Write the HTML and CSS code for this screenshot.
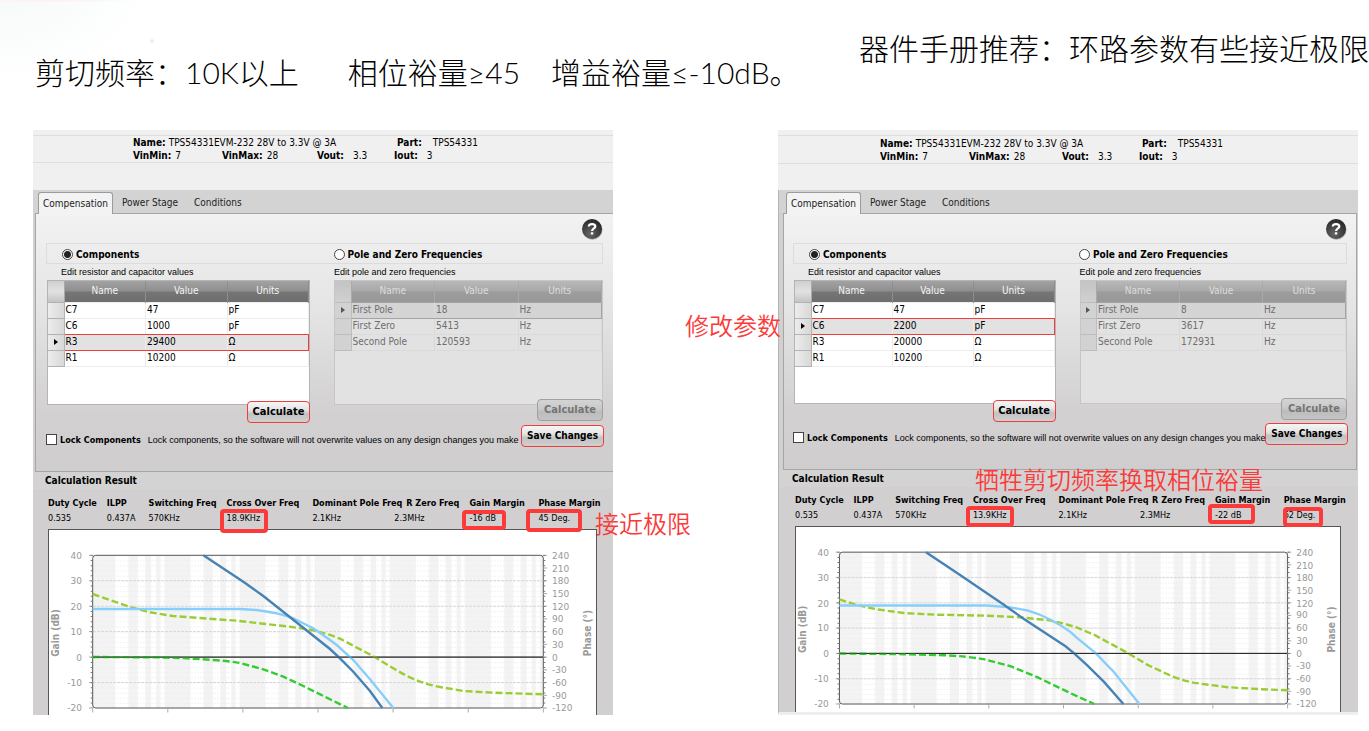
FILE: index.html
```html
<!DOCTYPE html>
<html lang="zh-CN">
<head>
<meta charset="utf-8">
<title>环路参数</title>
<link rel="stylesheet" href="styles.css">
</head>
<body>
<svg class="defs" aria-hidden="true">
  <defs>
    <pattern id="decade" x="44.7" y="0" width="75.1" height="200" patternUnits="userSpaceOnUse">
      <path fill="#f3f3f3" d="M0 0h22.6v200H0zM35.8 0h9.4v200h-9.4zM52.5 0h5.9v200h-5.9zM63.5 0h4.3v200h-4.3zM71.7 0h3.4v200h-3.4z"/>
    </pattern>
    <pattern id="minor" x="0" y="26.3" width="20" height="5.09" patternUnits="userSpaceOnUse">
      <path stroke="#ececec" stroke-width=".7" stroke-dasharray="2 1" d="M0 .5h20"/>
    </pattern>
    <radialGradient id="ball" cx=".4" cy=".75" r=".8">
      <stop offset="0" stop-color="#666"/><stop offset="1" stop-color="#222"/>
    </radialGradient>
    <symbol id="axes" viewBox="0 0 549 188">
      <rect x="44.7" y="26.3" width="450.6" height="152.7" fill="url(#decade)"/>
      <rect x="44.7" y="26.3" width="450.6" height="152.7" fill="url(#minor)"/>
      <path stroke="#d8d8d8" stroke-dasharray="3 1" d="M45 51.7h450M45 77.2h450M45 102.6h450M45 153.5h450"/>
      <path stroke="#222" d="M45 128.1h450"/>
      <rect x="44.7" y="26.3" width="450.6" height="152.7" rx="3" fill="none" stroke="#555"/>
      <path stroke="#aaa" d="M41 26.3h4M41 51.7h4M41 77.2h4M41 102.6h4M41 128.1h4M41 153.5h4M41 179h4M44.7 179v4.500M119.800 179v4.500M194.900 179v4.500M270 179v4.500M345.100 179v4.500M420.200 179v4.500M495.300 179v4.500M495 26.300h4M495 39h4M495 51.700h4M495 64.500h4M495 77.200h4M495 89.900h4M495 102.600h4M495 115.400h4M495 128.100h4M495 140.800h4M495 153.500h4M495 166.300h4M495 179h4"/>
      <path stroke="#777" stroke-width="2" stroke-dasharray="1 4.090" d="M43.700 26v153M496.300 26v153"/>
      <g class="tick tick-left">
        <text x="34" y="30">40</text><text x="34" y="55">30</text><text x="34" y="81">20</text><text x="34" y="106">10</text><text x="34" y="132">0</text><text x="34" y="157">-10</text><text x="34" y="182">-20</text>
      </g>
      <g class="tick">
        <text x="504" y="30">240</text><text x="504" y="43">210</text><text x="504" y="55">180</text><text x="504" y="68">150</text><text x="504" y="81">120</text><text x="504" y="93">90</text><text x="504" y="106">60</text><text x="504" y="119">30</text><text x="504" y="132">0</text><text x="504" y="144">-30</text><text x="504" y="157">-60</text><text x="504" y="170">-90</text><text x="504" y="182">-120</text>
      </g>
      <text class="axis" transform="translate(11 104) rotate(-90)">Gain (dB)</text>
      <text class="axis" transform="translate(543 104) rotate(-90)">Phase (°)</text>
    </symbol>
    <symbol id="help" viewBox="0 0 22 22">
      <circle cx="11.500" cy="11.800" r="10" fill="#aaa"/>
      <circle cx="11" cy="11" r="10" fill="url(#ball)"/>
      <path fill="none" stroke="#fff" stroke-width="2.200" d="M7.800 8.500c0-3.300 6.500-3.300 6.500 0 0 2-3.200 2-3.200 4.500"/>
      <path fill="#fff" d="M9.900 14.300h2.400v2.200H9.900z"/>
    </symbol>
  </defs>
</svg>
<div class="slide">
  <header class="headline">
    <p class="criteria"><span>剪切频率：10K以上</span><span>相位裕量≥45</span><span>增益裕量≤-10dB。</span></p>
    <p class="advice">器件手册推荐：环路参数有些接近极限</p>
  </header>
  <main class="compare">
    <section class="panel panel-before">
      <dl class="info">
        <div class="wide"><dt>Name:</dt><dd>TPS54331EVM-232 28V to 3.3V @ 3A</dd></div>
        <div class="part"><dt>Part:</dt><dd>TPS54331</dd></div>
        <div><dt>VinMin:</dt><dd>7</dd></div>
        <div><dt>VinMax:</dt><dd>28</dd></div>
        <div class="out"><dt>Vout:</dt><dd>3.3</dd></div>
        <div class="out"><dt>Iout:</dt><dd>3</dd></div>
      </dl>
      <div class="workspace">
        <nav class="tabs"><button class="tab active" type="button">Compensation</button><button class="tab" type="button">Power Stage</button><button class="tab" type="button">Conditions</button></nav>
        <form class="editor">
          <button class="help" type="button" aria-label="Help"><svg><use href="#help"/></svg></button>
          <div class="modes">
            <label class="mode"><input type="radio" name="mode" checked>Components</label>
            <label class="mode"><input type="radio" name="mode">Pole and Zero Frequencies</label>
          </div>
          <div class="columns">
            <div class="column">
              <p class="hint">Edit resistor and capacitor values</p>
              <div class="grid">
                <table>
                  <thead><tr><th></th><th>Name</th><th>Value</th><th>Units</th></tr></thead>
                  <tbody>
                    <tr><th></th><td>C7</td><td>47</td><td>pF</td></tr>
                    <tr><th></th><td>C6</td><td>1000</td><td>pF</td></tr>
                    <tr class="current"><th></th><td>R3</td><td>29400</td><td>Ω</td></tr>
                    <tr><th></th><td>R1</td><td>10200</td><td>Ω</td></tr>
                  </tbody>
                </table>
              </div>
              <button class="action" type="button">Calculate</button>
            </div>
            <div class="column inactive">
              <p class="hint">Edit pole and zero frequencies</p>
              <div class="grid">
                <table>
                  <thead><tr><th></th><th>Name</th><th>Value</th><th>Units</th></tr></thead>
                  <tbody>
                    <tr class="current"><th></th><td>First Pole</td><td>18</td><td>Hz</td></tr>
                    <tr><th></th><td>First Zero</td><td>5413</td><td>Hz</td></tr>
                    <tr><th></th><td>Second Pole</td><td>120593</td><td>Hz</td></tr>
                  </tbody>
                </table>
              </div>
              <button class="action" type="button" disabled>Calculate</button>
            </div>
          </div>
          <div class="lock-row">
            <label class="lock"><input type="checkbox">Lock Components</label>
            <span class="lock-text">Lock components, so the software will not overwrite values on any design changes you make</span>
            <button class="action save" type="button">Save Changes</button>
          </div>
        </form>
        <h2 class="result-title">Calculation Result</h2>
        <table class="results">
          <thead><tr><th>Duty Cycle</th><th>ILPP</th><th>Switching Freq</th><th>Cross Over Freq</th><th>Dominant Pole Freq</th><th class="zero">R Zero Freq</th><th>Gain Margin</th><th>Phase Margin</th></tr></thead>
          <tbody><tr><td>0.535</td><td>0.437A</td><td>570KHz</td><td>18.9KHz<i class="mark mark-cross"></i></td><td>2.1KHz</td><td>2.3MHz</td><td>-16 dB<i class="mark mark-gain"></i></td><td>45 Deg.<i class="mark mark-phase"></i></td></tr></tbody>
        </table>
        <div class="chart">
          <svg viewBox="0 0 549 188" role="img" aria-label="Gain and phase">
            <use href="#axes"/>
            <path class="curve olive" d="M44.700 65 62 71 82 78 102 83.300 125 87 155.300 89.300 188.700 91.700 215.300 94.700 242 97.700 262 100.700Q278 104 292 109.700L305.300 116.700 325.300 127.300 345.300 139.300Q358 147 368.700 151.300T392 158L415.300 162 445.300 163.700 495.300 165.300"/>
            <path class="curve sky" d="M44.700 80H192L208.700 81 228.700 84.300Q241 87 248.700 91T265.300 99.300L282 111 288.700 116 305.300 131 322 150.300 345.300 179"/>
            <path class="curve steel" d="M155.300 26.300 195.300 52.700 215.300 67 232 80.300 282 120 292 129.300 305.300 142.700 322 162 334.300 179"/>
            <path class="curve green" d="M44.700 128 108.700 128.300 138.700 129.300 165.300 131Q180 132 192 134L215.300 140.300 235.300 147.700 255.300 157 282 170.300 300 179"/>
            <path stroke="#222" stroke-opacity=".6" d="M45 128.100h450"/>
          </svg>
        </div>
      </div>
      <p class="note note-limit">接近极限</p>
    </section>
    <section class="panel panel-after">
      <dl class="info">
        <div class="wide"><dt>Name:</dt><dd>TPS54331EVM-232 28V to 3.3V @ 3A</dd></div>
        <div class="part"><dt>Part:</dt><dd>TPS54331</dd></div>
        <div><dt>VinMin:</dt><dd>7</dd></div>
        <div><dt>VinMax:</dt><dd>28</dd></div>
        <div class="out"><dt>Vout:</dt><dd>3.3</dd></div>
        <div class="out"><dt>Iout:</dt><dd>3</dd></div>
      </dl>
      <div class="workspace">
        <nav class="tabs"><button class="tab active" type="button">Compensation</button><button class="tab" type="button">Power Stage</button><button class="tab" type="button">Conditions</button></nav>
        <form class="editor">
          <button class="help" type="button" aria-label="Help"><svg><use href="#help"/></svg></button>
          <div class="modes">
            <label class="mode"><input type="radio" name="mode" checked>Components</label>
            <label class="mode"><input type="radio" name="mode">Pole and Zero Frequencies</label>
          </div>
          <div class="columns">
            <div class="column">
              <p class="hint">Edit resistor and capacitor values</p>
              <div class="grid">
                <table>
                  <thead><tr><th></th><th>Name</th><th>Value</th><th>Units</th></tr></thead>
                  <tbody>
                    <tr><th></th><td>C7</td><td>47</td><td>pF</td></tr>
                    <tr class="current"><th></th><td>C6</td><td>2200</td><td>pF</td></tr>
                    <tr><th></th><td>R3</td><td>20000</td><td>Ω</td></tr>
                    <tr><th></th><td>R1</td><td>10200</td><td>Ω</td></tr>
                  </tbody>
                </table>
              </div>
              <button class="action" type="button">Calculate</button>
            </div>
            <div class="column inactive">
              <p class="hint">Edit pole and zero frequencies</p>
              <div class="grid">
                <table>
                  <thead><tr><th></th><th>Name</th><th>Value</th><th>Units</th></tr></thead>
                  <tbody>
                    <tr class="current"><th></th><td>First Pole</td><td>8</td><td>Hz</td></tr>
                    <tr><th></th><td>First Zero</td><td>3617</td><td>Hz</td></tr>
                    <tr><th></th><td>Second Pole</td><td>172931</td><td>Hz</td></tr>
                  </tbody>
                </table>
              </div>
              <button class="action" type="button" disabled>Calculate</button>
            </div>
          </div>
          <div class="lock-row">
            <label class="lock"><input type="checkbox">Lock Components</label>
            <span class="lock-text">Lock components, so the software will not overwrite values on any design changes you make</span>
            <button class="action save" type="button">Save Changes</button>
          </div>
        </form>
        <h2 class="result-title">Calculation Result</h2>
        <table class="results">
          <thead><tr><th>Duty Cycle</th><th>ILPP</th><th>Switching Freq</th><th>Cross Over Freq</th><th>Dominant Pole Freq</th><th class="zero">R Zero Freq</th><th>Gain Margin</th><th>Phase Margin</th></tr></thead>
          <tbody><tr><td>0.535</td><td>0.437A</td><td>570KHz</td><td>13.9KHz<i class="mark mark-cross"></i></td><td>2.1KHz</td><td>2.3MHz</td><td>-22 dB<i class="mark mark-gain"></i></td><td>62 Deg.<i class="mark mark-phase"></i></td></tr></tbody>
        </table>
        <div class="chart">
          <svg viewBox="0 0 549 188" role="img" aria-label="Gain and phase">
            <use href="#axes"/>
            <path class="curve olive" d="M44.700 73.800 62.200 79.500 82.300 83.800 109.200 87.500 142.800 89.200 193 90.200 223.400 91.600 253.700 94.600Q270 97.500 283.800 102.300L300.600 109.300 334.200 127.500 354.400 139.600 377.900 150.600Q390 155.500 401.400 157.700L435 162.100 468.600 164.100 495.500 165.100"/>
            <path class="curve sky" d="M44.700 79.900H193L216.700 81.800 233.500 84.900Q246 88.500 257 94.300T277.200 106.700L283.800 112.700 302.300 127.800 320.800 147 346.300 179"/>
            <path class="curve steel" d="M131.700 26.400 163 47.200 210 79.100 230.200 93.600 272 121 280.400 127.800 293.900 140.200 310.700 156.700 330.200 179"/>
            <path class="curve green" d="M44.700 128.200 109.200 128.900 149.500 129.900Q173 131 189.800 133.900L216.700 141 243.600 152 277.200 168.200 301 179"/>
            <path stroke="#222" stroke-opacity=".6" d="M45 128.100h450"/>
          </svg>
        </div>
      </div>
      <p class="note note-edit">修改参数</p>
      <p class="note note-trade">牺牲剪切频率换取相位裕量</p>
    </section>
  </main>
</div>
</body>
</html>
```

FILE: styles.css
```css
* { box-sizing: border-box; }
body {
  margin: 0;
  background: #fff;
  color: #000;
  font-family: "DejaVu Sans Condensed", "DejaVu Sans", sans-serif;
  font-size: 10px;
}
p, h2, dl, dd { margin: 0; }
button { font-family: inherit; }
table { border-collapse: collapse; }
.defs { position: absolute; width: 0; height: 0; }

.slide {
  overflow: hidden;
  background:
    radial-gradient(circle at 152px 41px, #e6e8e8 0, transparent 3px),
    radial-gradient(ellipse at 50px 0, #fdeff0 0, transparent 90px) 0 0 / 400px 12px no-repeat,
    radial-gradient(ellipse at 0 0, #f7fafa 0, #fff 150px);
}
.headline {
  display: flex;
  justify-content: space-between;
  align-items: flex-start;
  height: 130px;
  padding: 26px 0 0 35px;
  font-family: Lato, "Noto Sans CJK SC", sans-serif;
  font-weight: 300;
  font-size: 30px;
  line-height: 44px;
  white-space: nowrap;
}
.criteria { display: flex; padding-top: 24px; }
.criteria span + span { margin-left: 49px; }
.criteria span + span + span { margin-left: 31px; }

.compare {
  display: grid;
  grid-template-columns: 1fr 1fr;
  gap: 165px;
  padding: 0 11px 16px 33px;
}
.panel { position: relative; min-width: 0; background: #f0f0f0; }

.info {
  display: grid;
  grid-template-columns: 89px 95px 77px 1fr;
  margin-bottom: 27px;
  padding-left: 100px;
  line-height: 13px;
  border-bottom: 1px solid #dedede;
  box-shadow: inset 0 5px #f0f0f0, inset 0 6px #dedede;
  padding-top: 6px;
}
.info div { display: flex; gap: 4px; white-space: nowrap; }
.info dt { font-weight: bold; }
.info .wide { grid-column: 1 / 4; gap: 3px; }
.info .part { gap: 11px; padding-left: 3px; }
.info .out { gap: 9px; }
.panel-after .info { padding-left: 102px; padding-top: 7px; margin-bottom: 26px; }
.panel-after .info .part, .panel-after .info .out { margin-left: -2px; }

.workspace { background: #d1cfd0; }
.tabs {
  display: flex;
  padding: 2px 0 0 5px;
  background: #d3d3d3;
}
.tab {
  height: 21px;
  padding: 0;
  margin-right: 14px;
  border: 1px solid transparent;
  border-bottom: 0;
  background: none;
  color: #222;
  font-size: 10px;
  line-height: 20px;
}
.tab.active {
  position: relative;
  height: 22px;
  margin: 0 8px -1px 0;
  padding: 0 4px;
  border-color: #9b9b9b;
  border-radius: 3px 3px 0 0;
  background: #f3f3f3;
}
.editor {
  margin-left: 2px;
  padding: 4px 10px 24px 11px;
  border: 1px solid #a6a6a6;
  border-right: 0;
  background: linear-gradient(#f2f2f2, #e4e4e4 38%, #d2d0d1 78%, #cfcdce);
}
.help {
  display: block;
  width: 22px;
  height: 22px;
  margin: 0 0 3px auto;
  padding: 0;
  border: 0;
  background: none;
}
.help svg { display: block; width: 22px; height: 22px; }
.modes, .columns {
  display: grid;
  grid-template-columns: 263fr 269fr;
  column-gap: 24px;
}
.modes { margin-left: -1px; border: 1px solid #dcdcdc; }
.mode {
  display: flex;
  align-items: center;
  gap: 3px;
  height: 19px;
  font-weight: bold;
  line-height: 19px;
  padding-top: 2px;
  white-space: nowrap;
}
.mode:first-child { padding-left: 15px; }
input[type="radio"], input[type="checkbox"] {
  appearance: none;
  flex: none;
  width: 11px;
  height: 11px;
  margin: 0;
  border: 1px solid #444;
  background: #fff;
}
input[type="radio"] { border-radius: 50%; }
input[type="radio"]:checked { background: radial-gradient(circle, #222 0 3px, #fff 4px); }

.hint {
  padding-left: 14px;
  font-family: "Liberation Sans", sans-serif;
  font-size: 9px;
  line-height: 16px;
}
.inactive .hint { padding-left: 0; }
.column { display: flex; flex-direction: column; }
.grid {
  min-height: 125px;
  border: 1px solid #b4b4b4;
  background: #fff;
}
.grid table { width: 100%; table-layout: fixed; }
.grid th, .grid td { height: 16px; padding: 0; line-height: 14px; }
.grid th:first-child { width: 16px; }
.grid thead th {
  height: 21px;
  border-right: 1px solid #8d8d8d;
  background: linear-gradient(#a2a2a2, #8e8e8e 48%, #757575 52%, #6e6e6e);
  color: #f4f4f4;
  font-weight: normal;
}
.grid thead th:first-child { background: linear-gradient(#cfcfcf, #e2e2e2 50%, #c4c4c4); border-right-color: #aaa; }
.grid tbody th {
  border: 1px solid #b2b2b2;
  border-left: 0;
  background: linear-gradient(90deg, #ececec, #d8d8d8);
}
.grid td { padding-left: 1px; border: 1px solid #ededed; }
.grid .current td { border-bottom-color: #f23b3b; background: #e2e2e2; }
.grid tr:has(+ .current) td { border-bottom-color: #f23b3b; }
.grid .current td:last-child { border-right-color: #f23b3b; }
.grid .current th::before {
  content: "";
  display: block;
  width: 0;
  margin: 0 auto;
  border: 3px solid transparent;
  border-left: 4px solid #000;
  border-right: 0;
}
.inactive .grid { background: #e2e2e2; border-color: #c6c6c6; }
.inactive .grid thead th { background: linear-gradient(#b8b8b8, #a8a8a8 48%, #9c9c9c 52%, #989898); color: #dcdcdc; border-color: #aaa; }
.inactive .grid thead th:first-child { background: linear-gradient(#c4c4c4, #d0d0d0); }
.inactive .grid tbody th { background: #d2d2d2; border-color: #bdbdbd; }
.inactive .grid td { color: #6e6e6e; border-color: #dadada; }
.inactive .grid .current td { background: #d4d4d4; border-top-color: #a4a4a4; border-bottom-color: #a4a4a4; }
.inactive .grid .current td:last-child { border-right-color: #a4a4a4; }
.inactive .grid .current th::before { border-left-color: #555; }

.action {
  align-self: flex-end;
  position: relative;
  width: 63px;
  height: 22px;
  margin-top: -4px;
  padding: 0;
  border: 1px solid #ef3c3c;
  border-radius: 4px;
  background: linear-gradient(#f6f6f6, #e4e4e4 40%, #c2c2c2 60%, #d0d0d0);
  color: #000;
  font-size: 11px;
  font-weight: bold;
  line-height: 18px;
  white-space: nowrap;
}
.action:disabled {
  width: 66px;
  margin-top: -6px;
  border-color: #a0a0a0;
  background: linear-gradient(#d4d4d4, #c9c9c9 45%, #bcbcbc 60%, #c4c4c4);
  color: #757575;
}
.lock-row { display: flex; align-items: center; margin: 2px -1px 0 -1px; }
.lock { display: flex; align-items: center; gap: 3px; font-size: 9px; font-weight: bold; padding-top: 7px; white-space: nowrap; }
.lock-text {
  margin-left: 7px;
  padding-top: 7px;
  font-family: "Liberation Sans", sans-serif;
  font-size: 9px;
  white-space: nowrap;
}
.action.save { width: 83px; margin: 0 0 0 auto; font-size: 10px; }

.result-title {
  padding-left: 12px;
  background: #d3d3d3;
  font-size: 10px;
  line-height: 17px;
}
.results {
  width: calc(100% - 15px);
  margin: 7px 0 3px 15px;
  table-layout: fixed;
}
.results th, .results td {
  position: relative;
  padding: 0;
  font-size: 9px;
  line-height: 15px;
  text-align: left;
  white-space: nowrap;
}
.results .zero { padding-left: 12px; }
.results th:nth-child(1) { width: 10.4%; }
.results th:nth-child(2) { width: 7.4%; }
.results th:nth-child(3) { width: 13.8%; }
.results th:nth-child(4) { width: 15.2%; }
.results th:nth-child(5) { width: 14.5%; }
.results th:nth-child(6) { width: 13.3%; }
.results th:nth-child(7) { width: 12.2%; }
.mark {
  position: absolute;
  z-index: 1;
  border: 4px solid #fb3a3a;
  border-radius: 4px;
}
.mark-cross { left: -7px; top: -2px; width: 48px; height: 24px; }
.mark-gain { left: -7px; top: -1px; width: 44px; height: 20px; }
.mark-phase { left: -12px; top: -2px; width: 56px; height: 23px; }

.chart {
  height: 186px;
  margin: 0 16px 0 15px;
  overflow: hidden;
  background: #fff;
  box-shadow: inset 1px 1px #555, inset -1px 0 #555;
}
.chart svg { display: block; width: 100%; }
.tick { fill: #999; font: 9px "DejaVu Sans", sans-serif; }
.tick-left { text-anchor: end; }
.axis { fill: #999; font: bold 10px "DejaVu Sans Condensed", "DejaVu Sans", sans-serif; text-anchor: middle; }
.curve { fill: none; stroke-width: 2.4; }
.olive { stroke: #9acd32; stroke-dasharray: 7 3; }
.green { stroke: #32cd32; stroke-dasharray: 7 3; }
.sky { stroke: #87cefa; }
.steel { stroke: #4682b4; }

.panel-after .workspace { border-left: 1px solid #b4b4b4; border-bottom: 2px solid #eee; }
.panel-after .tabs { padding-left: 7px; }
.panel-after .editor { margin: 0 1px 0 4px; padding: 4px 9px 24px 10px; border-right: 1px solid #a6a6a6; }
.panel-after .grid { min-height: 124px; }
.panel-after .lock-row { margin-top: 1px; }
.panel-after .result-title { padding-left: 13px; }
.panel-after .results { width: calc(100% - 16px); margin: 6px 0 3px 16px; }
.panel-after .chart { margin: 0 17px 0 16px; }
.panel-after .mark-cross { height: 21px; }
.panel-after .mark-gain { top: -4px; width: 47px; }
.panel-after .mark-phase { left: -1px; top: -1px; width: 40px; height: 20px; }

.note {
  position: absolute;
  color: #fb3a3a;
  font-family: "Noto Sans CJK SC", sans-serif;
  font-size: 24px;
  font-weight: 350;
  line-height: 36px;
  white-space: nowrap;
}
.note-limit { left: 562px; top: 375px; }
.note-edit { left: -93px; top: 177px; }
.note-trade { left: 197px; top: 331px; }
```
